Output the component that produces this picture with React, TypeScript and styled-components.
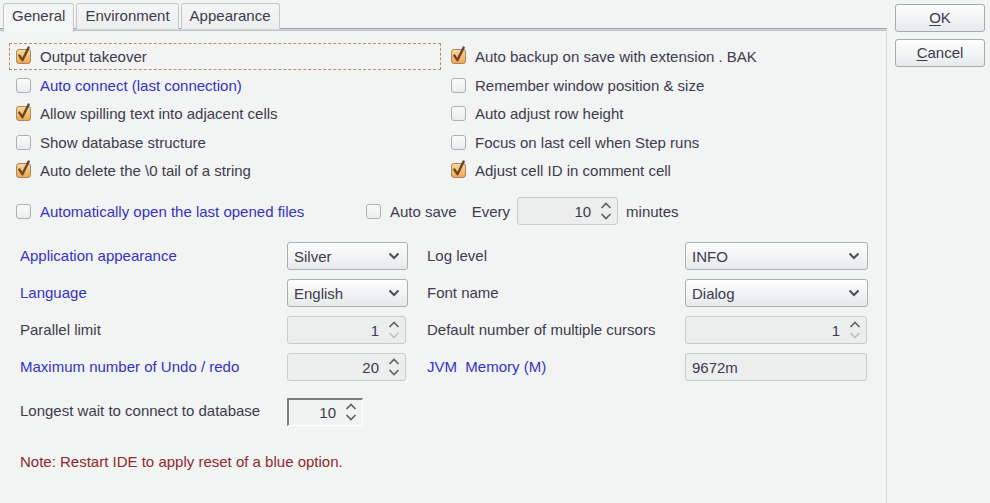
import React from "react";
import styled, { createGlobalStyle } from "styled-components";

const Global = createGlobalStyle`
  html, body { margin: 0; padding: 0; background: #f2f3f3; }
  body { font-family: "Liberation Sans", Arial, sans-serif; font-size: 15px; color: #3c3c4c; }
  * { box-sizing: border-box; }
`;

const Page = styled.div`
  width: 990px;
  height: 503px;
  display: flex;
  background: #f2f3f3;
  overflow: hidden;
`;

const TabPane = styled.div`
  width: 887px;
  display: flex;
  flex-direction: column;
`;

const TabStrip = styled.div`
  display: flex;
  gap: 2px;
  padding: 3px 0 0 3px;
  height: 28px;
`;

const Tab = styled.div<{ $active?: boolean }>`
  padding: 0 8px;
  display: flex;
  align-items: center;
  border: 1px solid #c3c9cc;
  border-bottom: none;
  border-radius: 3px 3px 0 0;
  background: ${(p) => (p.$active ? "#f4f5f5" : "linear-gradient(#f4f5f5, #eceeee)")};
  color: #3c3c4c;
  margin-bottom: ${(p) => (p.$active ? "-3px" : "0")};
  position: relative;
  z-index: ${(p) => (p.$active ? 2 : 0)};
  height: ${(p) => (p.$active ? "29px" : "26px")};
  padding-bottom: ${(p) => (p.$active ? "6px" : "3px")};
`;

const Panel = styled.div`
  flex: 1;
  border-top: 1px solid #98a0a6;
  box-shadow: inset 0 1px 0 #d4d8da, inset 0 2px 0 #b9bfc3;
  border-right: 1px solid #d3d7d9;
  padding: 14px 0 0 9px;
  display: flex;
  flex-direction: column;
`;

const CheckGrid = styled.div`
  display: grid;
  grid-template-columns: 432px 420px;
  column-gap: 3px;
  grid-template-rows: repeat(5, 27px);
  row-gap: 1.5px;
`;

const CheckItem = styled.div<{ $focus?: boolean; $blue?: boolean; $w?: number }>`
  display: flex;
  align-items: center;
  gap: 8px;
  padding-left: 6px;
  height: 27px;
  border: 1px dashed ${(p) => (p.$focus ? "#b68a6a" : "transparent")};
  color: ${(p) => (p.$blue ? "#3333c4" : "#3c3c4c")};
  width: ${(p) => (p.$w ? `${p.$w}px` : "auto")};
  white-space: nowrap;
`;

const BoxSvg = styled.svg`
  flex: none;
  margin-top: -2px;
`;

function CheckBox({ checked }: { checked?: boolean }) {
  return (
    <BoxSvg width="16" height="19" viewBox="0 0 16 19">
      <defs>
        <linearGradient id="cbOn" x1="0" y1="0" x2="0" y2="1">
          <stop offset="0" stopColor="#fbd9a0" />
          <stop offset="1" stopColor="#f2a448" />
        </linearGradient>
        <linearGradient id="cbOff" x1="0" y1="0" x2="0" y2="1">
          <stop offset="0" stopColor="#fbfbfb" />
          <stop offset="1" stopColor="#e9ebec" />
        </linearGradient>
      </defs>
      <rect
        x="0.5"
        y="3.5"
        width="14"
        height="14"
        rx="2.5"
        fill={checked ? "url(#cbOn)" : "url(#cbOff)"}
        stroke={checked ? "#a88766" : "#a9b1b7"}
      />
      {checked && (
        <path
          d="M3.4 9.6 L6.4 14.2 L12.6 1.6"
          fill="none"
          stroke="#6a4528"
          strokeWidth="2.4"
          strokeLinejoin="round"
          strokeLinecap="round"
        />
      )}
    </BoxSvg>
  );
}

const OptionRow = styled.div`
  display: flex;
  align-items: center;
  height: 28px;
  margin-top: 13px;
`;

const Plain = styled.span<{ $ml?: number }>`
  color: #3c3c4c;
  margin-left: ${(p) => p.$ml ?? 0}px;
  white-space: nowrap;
`;

const Spinner = styled.div<{ $w: number; $ml?: number; $sunken?: boolean }>`
  width: ${(p) => p.$w}px;
  height: 28px;
  margin-left: ${(p) => p.$ml ?? 0}px;
  display: flex;
  align-items: center;
  justify-content: flex-end;
  gap: 9px;
  padding-right: 5px;
  background: ${(p) => (p.$sunken ? "#f1f2f2" : "#eceeee")};
  border: 1px solid #c7cbce;
  border-radius: ${(p) => (p.$sunken ? "0" : "3px")};
  ${(p) =>
    p.$sunken
      ? `border-top: 2px solid #7c7f82; border-left: 2px solid #7c7f82; border-right: 1px solid #ffffff; border-bottom: 1px solid #ffffff;`
      : ""}
  color: #3c3c4c;
`;

const Arrows = styled.svg`
  flex: none;
`;

function SpinArrows({ downDisabled }: { downDisabled?: boolean }) {
  return (
    <Arrows width="12" height="20" viewBox="0 0 12 20">
      <path d="M1.5 7 L6 2.5 L10.5 7" fill="none" stroke="#5e6266" strokeWidth="1.7" />
      <path
        d="M1.5 13 L6 17.5 L10.5 13"
        fill="none"
        stroke={downDisabled ? "#bcc0c3" : "#5e6266"}
        strokeWidth="1.7"
      />
    </Arrows>
  );
}

const SettingsGrid = styled.div`
  display: grid;
  grid-template-columns: 267px 140px 258px 182px;
  grid-auto-rows: 28px;
  row-gap: 9px;
  margin-top: 17px;
  padding-left: 11px;
  align-items: center;
`;

const Label = styled.span<{ $blue?: boolean }>`
  color: ${(p) => (p.$blue ? "#3333c4" : "#3c3c4c")};
  white-space: nowrap;
  margin-top: -2px;
`;

const Combo = styled.div<{ $w: number }>`
  width: ${(p) => p.$w}px;
  height: 28px;
  display: flex;
  align-items: center;
  justify-content: space-between;
  padding: 0 7px 0 6px;
  border: 1px solid #a9b0b5;
  border-radius: 3px;
  background: linear-gradient(#fdfdfd 0%, #f3f4f5 45%, #e6e9ea 100%);
  color: #3c3c4c;
`;

function Chevron() {
  return (
    <svg width="12" height="8" viewBox="0 0 12 8">
      <path d="M1.5 1.5 L6 6 L10.5 1.5" fill="none" stroke="#4a4d50" strokeWidth="2" />
    </svg>
  );
}

const TextField = styled.div<{ $w: number }>`
  width: ${(p) => p.$w}px;
  height: 28px;
  display: flex;
  align-items: center;
  padding-left: 6px;
  background: #eceeee;
  border: 1px solid #c5c9cc;
  border-radius: 3px;
  color: #3c3c4c;
`;

const WaitRow = styled.div`
  display: grid;
  grid-template-columns: 267px 76px;
  align-items: center;
  height: 29px;
  margin-top: 16px;
  padding-left: 11px;
`;

const Note = styled.div`
  margin-top: 27px;
  padding-left: 11px;
  color: #8e2a2a;
  white-space: nowrap;
`;

const ButtonColumn = styled.div`
  display: flex;
  flex-direction: column;
  gap: 7px;
  padding: 4px 0 0 8px;
`;

const Button = styled.div`
  width: 90px;
  height: 28px;
  display: flex;
  align-items: center;
  justify-content: center;
  border: 1px solid #a3abb0;
  border-radius: 3px;
  background: linear-gradient(#fdfdfd 0%, #f4f5f6 45%, #e7eaeb 100%);
  color: #3c3c4c;
  padding-bottom: 1px;
  u { text-decoration: underline; text-underline-offset: 2px; }
`;

export default function App() {
  return (
    <>
      <Global />
      <Page>
        <TabPane>
          <TabStrip>
            <Tab $active>General</Tab>
            <Tab>Environment</Tab>
            <Tab>Appearance</Tab>
          </TabStrip>
          <Panel>
            <CheckGrid>
              <CheckItem $focus>
                <CheckBox checked />
                Output takeover
              </CheckItem>
              <CheckItem>
                <CheckBox checked />
                Auto backup on save with extension . BAK
              </CheckItem>
              <CheckItem $blue>
                <CheckBox />
                Auto connect (last connection)
              </CheckItem>
              <CheckItem>
                <CheckBox />
                Remember window position &amp; size
              </CheckItem>
              <CheckItem>
                <CheckBox checked />
                Allow spilling text into adjacent cells
              </CheckItem>
              <CheckItem>
                <CheckBox />
                Auto adjust row height
              </CheckItem>
              <CheckItem>
                <CheckBox />
                Show database structure
              </CheckItem>
              <CheckItem>
                <CheckBox />
                Focus on last cell when Step runs
              </CheckItem>
              <CheckItem>
                <CheckBox checked />
                Auto delete the \0 tail of a string
              </CheckItem>
              <CheckItem>
                <CheckBox checked />
                Adjust cell ID in comment cell
              </CheckItem>
            </CheckGrid>

            <OptionRow>
              <CheckItem $blue $w={350}>
                <CheckBox />
                Automatically open the last opened files
              </CheckItem>
              <CheckItem>
                <CheckBox />
                Auto save
              </CheckItem>
              <Plain $ml={14}>Every</Plain>
              <Spinner $w={101} $ml={7}>
                10
                <SpinArrows />
              </Spinner>
              <Plain $ml={8}>minutes</Plain>
            </OptionRow>

            <SettingsGrid>
              <Label $blue>Application appearance</Label>
              <Combo $w={121}>
                Silver
                <Chevron />
              </Combo>
              <Label>Log level</Label>
              <Combo $w={183}>
                INFO
                <Chevron />
              </Combo>

              <Label $blue>Language</Label>
              <Combo $w={121}>
                English
                <Chevron />
              </Combo>
              <Label>Font name</Label>
              <Combo $w={183}>
                Dialog
                <Chevron />
              </Combo>

              <Label>Parallel limit</Label>
              <Spinner $w={119}>
                1
                <SpinArrows downDisabled />
              </Spinner>
              <Label>Default number of multiple cursors</Label>
              <Spinner $w={182}>
                1
                <SpinArrows downDisabled />
              </Spinner>

              <Label $blue>Maximum number of Undo / redo</Label>
              <Spinner $w={119}>
                20
                <SpinArrows />
              </Spinner>
              <Label $blue>JVM&nbsp; Memory (M)</Label>
              <TextField $w={182}>9672m</TextField>
            </SettingsGrid>

            <WaitRow>
              <Label>Longest wait to connect to database</Label>
              <Spinner $w={76} $sunken>
                10
                <SpinArrows />
              </Spinner>
            </WaitRow>

            <Note>Note: Restart IDE to apply reset of a blue option.</Note>
          </Panel>
        </TabPane>
        <ButtonColumn>
          <Button>
            <span>
              <u>O</u>K
            </span>
          </Button>
          <Button>
            <span>
              <u>C</u>ancel
            </span>
          </Button>
        </ButtonColumn>
      </Page>
    </>
  );
}
